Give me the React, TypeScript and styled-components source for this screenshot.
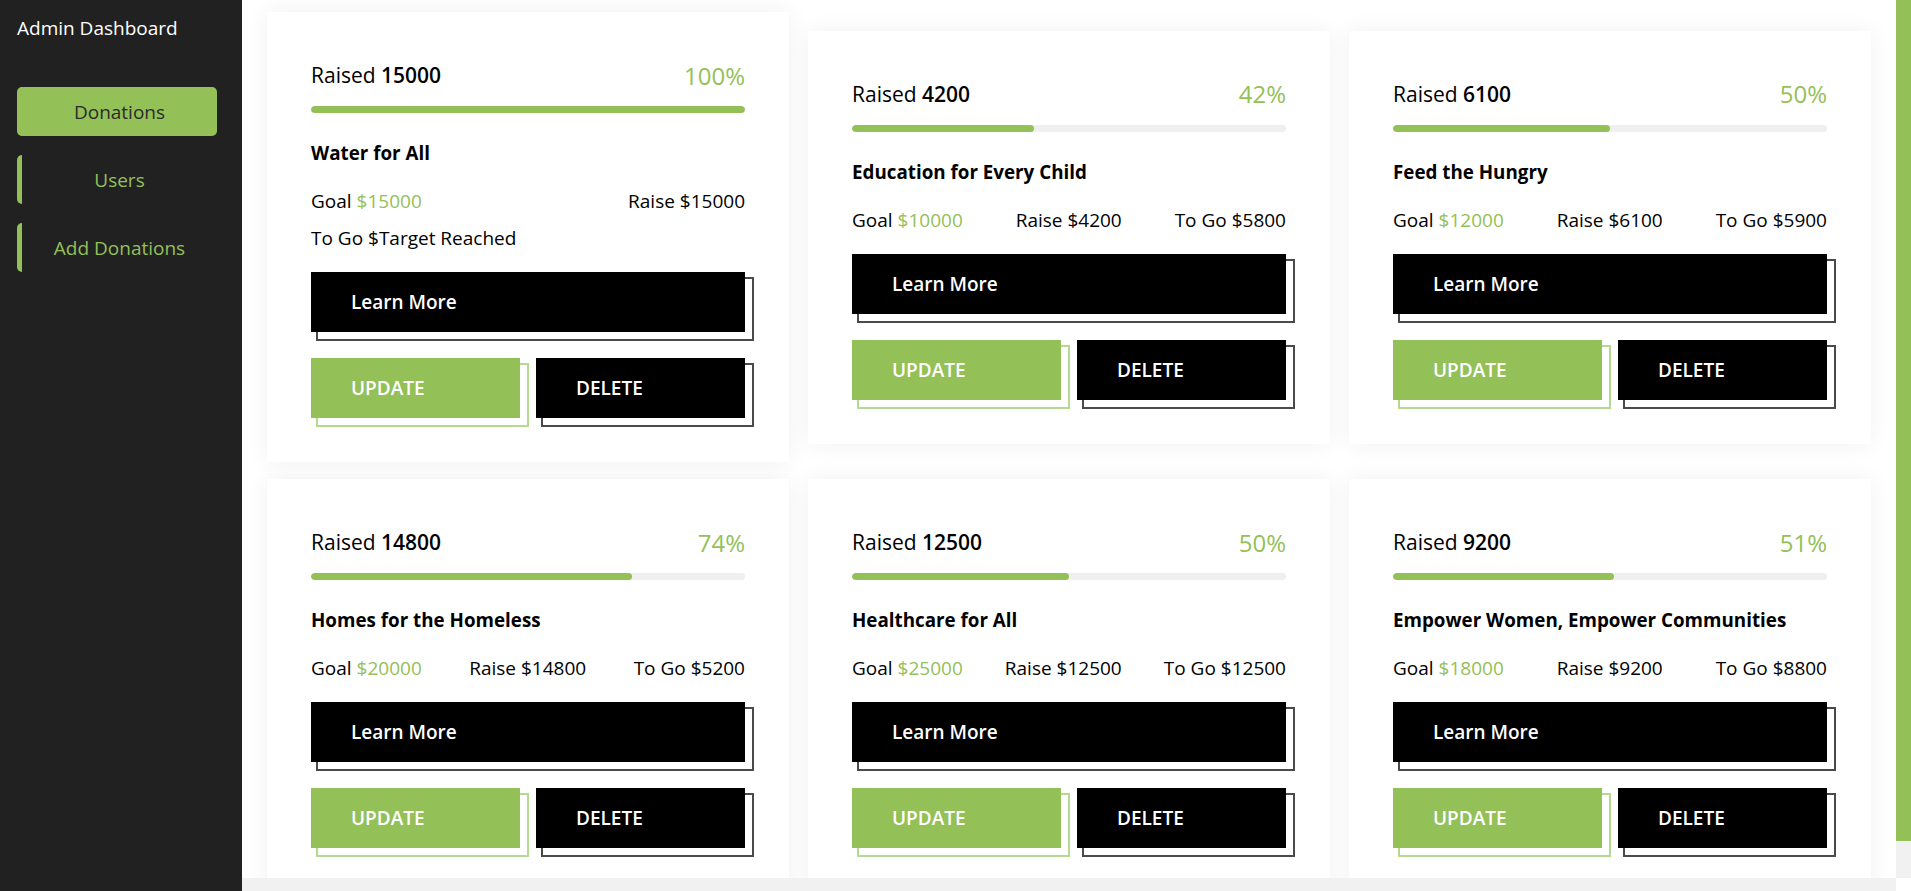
import React from "react";
import styled, { createGlobalStyle, css } from "styled-components";

const GREEN = "#94c058";
const FONT = `"Open Sans", "Noto Sans", sans-serif`;

const GlobalStyle = createGlobalStyle`
  html, body {
    margin: 0;
    padding: 0;
    height: 100%;
    overflow: hidden;
    font-family: ${FONT};
  }
  * { box-sizing: border-box; }
`;

const Layout = styled.div`
  display: flex;
  height: 100vh;
  width: 100vw;
`;

const Sidebar = styled.aside`
  width: 242px;
  flex-shrink: 0;
  height: 100%;
  background: #212121;
  padding: 16px 17px;
`;

const Brand = styled.h1`
  margin: 0;
  font-size: 19px;
  font-weight: 400;
  line-height: 25px;
  color: #fff;
`;

const Nav = styled.nav`
  margin-top: 46px;
  display: flex;
  flex-direction: column;
  gap: 19px;
`;

const NavItem = styled.a<{ $active?: boolean }>`
  display: flex;
  align-items: center;
  justify-content: center;
  width: 200px;
  height: 49px;
  border-left: 5px solid ${GREEN};
  border-radius: 5px;
  font-size: 19px;
  color: ${GREEN};
  text-decoration: none;
  ${(p) =>
    p.$active &&
    css`
      background: ${GREEN};
      color: #2b2b2b;
    `}
`;

const MainColumn = styled.div`
  flex: 1;
  min-width: 0;
  display: flex;
  flex-direction: column;
`;

const ViewportRow = styled.div`
  flex: 1;
  min-height: 0;
  display: flex;
`;

const Content = styled.main`
  flex: 1;
  min-width: 0;
  overflow: hidden;
  background: #fff;
`;

const VScrollbar = styled.div`
  width: 15px;
  flex-shrink: 0;
  background: #f1f1f1;
  display: flex;
  flex-direction: column;
`;

const VThumb = styled.div`
  background: ${GREEN};
`;

const HScrollbar = styled.div`
  height: 13px;
  flex-shrink: 0;
  display: flex;
`;

const HTrack = styled.div`
  flex: 1;
  background: #f1f1f1;
`;

const Corner = styled.div`
  width: 15px;
  background: #fff;
`;

const Grid = styled.div`
  display: grid;
  grid-template-columns: repeat(3, 1fr);
  column-gap: 19px;
  row-gap: 17px;
  align-items: center;
  padding: 12px 25px 24px;
`;

const Card = styled.article`
  isolation: isolate;
  background: #fff;
  padding: 44px;
  box-shadow: 0 0 22px rgba(0, 0, 0, 0.06);
  color: #000;
`;

const Header = styled.div`
  display: flex;
  justify-content: space-between;
  align-items: center;
  height: 38px;
`;

const Raised = styled.span`
  font-size: 21px;
  font-weight: 400;
  b {
    font-weight: 600;
  }
`;

const Percent = styled.span`
  font-size: 24px;
  font-weight: 400;
  color: ${GREEN};
`;

const Track = styled.div`
  margin-top: 12px;
  height: 7px;
  border-radius: 4px;
  background: #efefef;
  overflow: hidden;
`;

const Fill = styled.div`
  height: 100%;
  border-radius: 4px;
  background: ${GREEN};
`;

const Title = styled.h3`
  margin: 27px 0 0;
  font-size: 18.8px;
  font-weight: 700;
  line-height: 27px;
`;

const Stats = styled.div`
  margin-top: 21px;
  display: flex;
  flex-wrap: wrap;
  justify-content: space-between;
  column-gap: 16px;
  row-gap: 10px;
  font-size: 19px;
  line-height: 27px;
`;

const Amount = styled.span`
  color: ${GREEN};
`;

const Button = styled.button<{ $variant: "dark" | "green" }>`
  position: relative;
  display: block;
  width: 100%;
  height: 60px;
  border: none;
  padding: 0 0 0 40px;
  text-align: left;
  font-family: ${FONT};
  font-size: 19px;
  font-weight: 600;
  color: #fff;
  cursor: pointer;
  background: ${(p) => (p.$variant === "green" ? GREEN : "#000")};
  &::after {
    content: "";
    position: absolute;
    top: 5px;
    left: 5px;
    width: 100%;
    height: 100%;
    border: 2px solid ${(p) => (p.$variant === "green" ? "#b6d992" : "#4a4a4a")};
    z-index: -1;
  }
`;

const LearnMore = styled(Button)`
  margin-top: 20px;
`;

const Actions = styled.div`
  margin-top: 26px;
  display: grid;
  grid-template-columns: 1fr 1fr;
  gap: 16px;
`;

type Donation = { title: string; raised: number; goal: number };

const donations: Donation[] = [
  { title: "Water for All", raised: 15000, goal: 15000 },
  { title: "Education for Every Child", raised: 4200, goal: 10000 },
  { title: "Feed the Hungry", raised: 6100, goal: 12000 },
  { title: "Homes for the Homeless", raised: 14800, goal: 20000 },
  { title: "Healthcare for All", raised: 12500, goal: 25000 },
  { title: "Empower Women, Empower Communities", raised: 9200, goal: 18000 },
];

function DonationCard({ d }: { d: Donation }) {
  const pct = Math.floor((d.raised / d.goal) * 100);
  const toGo = d.goal - d.raised;
  return (
    <Card>
      <Header>
        <Raised>
          Raised <b>{d.raised}</b>
        </Raised>
        <Percent>{pct}%</Percent>
      </Header>
      <Track>
        <Fill style={{ width: `${pct}%` }} />
      </Track>
      <Title>{d.title}</Title>
      <Stats>
        <span>
          Goal <Amount>${d.goal}</Amount>
        </span>
        <span>Raise ${d.raised}</span>
        <span>To Go ${toGo > 0 ? toGo : "Target Reached"}</span>
      </Stats>
      <LearnMore $variant="dark">Learn More</LearnMore>
      <Actions>
        <Button $variant="green">UPDATE</Button>
        <Button $variant="dark">DELETE</Button>
      </Actions>
    </Card>
  );
}

export default function App() {
  return (
    <>
      <GlobalStyle />
      <Layout>
        <Sidebar>
          <Brand>Admin Dashboard</Brand>
          <Nav>
            <NavItem $active>Donations</NavItem>
            <NavItem>Users</NavItem>
            <NavItem>Add Donations</NavItem>
          </Nav>
        </Sidebar>
        <MainColumn>
          <ViewportRow>
            <Content>
              <Grid>
                {donations.map((d) => (
                  <DonationCard key={d.title} d={d} />
                ))}
              </Grid>
            </Content>
            <VScrollbar>
              <VThumb style={{ height: `${(878 / 917) * 100}%` }} />
            </VScrollbar>
          </ViewportRow>
          <HScrollbar>
            <HTrack />
            <Corner />
          </HScrollbar>
        </MainColumn>
      </Layout>
    </>
  );
}
